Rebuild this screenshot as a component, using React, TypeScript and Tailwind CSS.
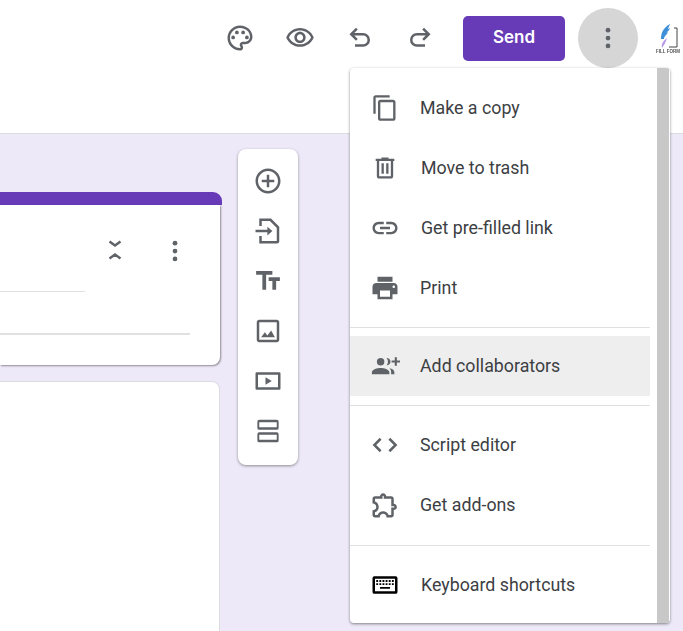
import React from 'react';

const Icon = ({ size = 30, className = '', children }: { size?: number; className?: string; children: React.ReactNode }) => (
    <svg width={size} height={size} viewBox="0 0 24 24" fill="#5f6368" className={className}>
        {children}
    </svg>
);

type MenuItem = { label: string; active?: boolean; size?: number; nudge?: boolean; icon: React.ReactNode };

const menuGroups: { separator: string; items: MenuItem[] }[] = [
    {
        separator: '',
        items: [
            { label: 'Make a copy', size: 28, icon: <path d="M16 1H4c-1.1 0-2 .9-2 2v14h2V3h12V1zm3 4H8c-1.1 0-2 .9-2 2v14c0 1.1.9 2 2 2h11c1.1 0 2-.9 2-2V7c0-1.1-.9-2-2-2zm0 16H8V7h11v14z" /> },
            { label: 'Move to trash', size: 28, nudge: true, icon: <path d="M15 4V3H9v1H4v2h1v13c0 1.1.9 2 2 2h10c1.1 0 2-.9 2-2V6h1V4h-5zm2 15H7V6h10v13zM9 8h2v9H9zm4 0h2v9h-2z" /> },
            { label: 'Get pre-filled link', nudge: true, icon: <path d="M3.9 12c0-1.71 1.39-3.1 3.1-3.1h4V7H7c-2.76 0-5 2.24-5 5s2.24 5 5 5h4v-1.9H7c-1.71 0-3.1-1.39-3.1-3.1zM8 13h8v-2H8v2zm9-6h-4v1.9h4c1.71 0 3.1 1.39 3.1 3.1s-1.39 3.1-3.1 3.1h-4V17h4c2.76 0 5-2.24 5-5s-2.24-5-5-5z" /> },
            { label: 'Print', icon: <path d="M19 8H5c-1.66 0-3 1.34-3 3v6h4v4h12v-4h4v-6c0-1.66-1.34-3-3-3zm-3 11H8v-5h8v5zm3-7c-.55 0-1-.45-1-1s.45-1 1-1 1 .45 1 1-.45 1-1 1zm-1-9H6v4h12V3z" /> },
        ],
    },
    {
        separator: 'mt-[9px] mb-[8px]',
        items: [
            {
                label: 'Add collaborators',
                active: true,
                icon: (
                    <>
                        <circle cx="8.5" cy="8.5" r="3" />
                        <path d="M1.500 18.500v-1.600c0-2.200 4.500-3.400 7-3.400s7 1.200 7 3.400v1.600zM13.200 5.600c1.900 0 3.200 1.300 3.200 2.900s-1.300 2.900-3.200 2.900c.7-.8 1.100-1.800 1.100-2.900s-.4-2.100-1.100-2.900zM15.600 13.700c2 .4 3.900 1.400 3.900 3.200v1.600h-2.600v-1.600c0-1.300-.5-2.400-1.300-3.200z" />
                        <path d="M19.800 5h1.700v2.500H24v1.700h-2.500v2.500h-1.700V9.200h-2.500V7.500h2.500z" />
                    </>
                ),
            },
        ],
    },
    {
        separator: 'my-[9px]',
        items: [
            { label: 'Script editor', icon: <path d="M8.500 7l-5 5 5 5M15.500 7l5 5-5 5" fill="none" stroke="#5f6368" strokeWidth="2" /> },
            { label: 'Get add-ons', icon: <path d="M10.5 4.5c.28 0 .5.22.5.5v2h6v6h2c.28 0 .5.22.5.5s-.22.5-.5.5h-2v6h-2.12c-.68-1.75-2.39-3-4.38-3s-3.7 1.25-4.38 3H4v-2.12c1.75-.68 3-2.39 3-4.38 0-1.99-1.24-3.7-2.99-4.38L4 7h6V5c0-.28.22-.5.5-.5m0-2C9.12 2.5 8 3.62 8 5H4c-1.1 0-1.99.9-1.99 2v3.8h.29c1.49 0 2.7 1.21 2.7 2.7s-1.21 2.7-2.7 2.7H2V20c0 1.1.9 2 2 2h3.8v-.3c0-1.49 1.21-2.7 2.7-2.7s2.7 1.21 2.7 2.7v.3H17c1.1 0 2-.9 2-2v-4c1.38 0 2.5-1.12 2.5-2.5S20.38 11 19 11V7c0-1.1-.9-2-2-2h-4c0-1.38-1.12-2.5-2.5-2.5z" /> },
        ],
    },
    {
        separator: 'mt-[10px] mb-[9px]',
        items: [
            {
                label: 'Keyboard shortcuts',
                nudge: true,
                icon: (
                    <g fill="#000">
                        <path fillRule="evenodd" d="M3.500 5h17A1.500 1.500 0 0 1 22 6.500v11a1.500 1.500 0 0 1-1.500 1.500h-17A1.500 1.500 0 0 1 2 17.500v-11A1.500 1.500 0 0 1 3.500 5zM4 7v10h16V7z" />
                        <path d="M5 8h1.500v1.500H5zM7.500 8H9v1.500H7.500zM10 8h1.500v1.500H10zM12.500 8H14v1.500h-1.500zM15 8h1.500v1.500H15zM17.500 8H19v1.500h-1.500zM5 10.500h1.500V12H5zM7.500 10.500H9V12H7.500zM10 10.500h1.500V12H10zM12.500 10.500H14V12h-1.500zM15 10.500h1.500V12H15zM17.500 10.500H19V12h-1.500zM8 13.500h8V15H8z" />
                    </g>
                ),
            },
        ],
    },
];

const Header = () => (
    <div className="h-[134px] bg-white border-b border-[#dadce0] shrink-0">
        <div className="flex items-center pl-[210px] pt-[8px]">
            <div className="w-[60px] h-[60px] flex items-center justify-center">
                <Icon>
                    <path d="M12 22C6.49 22 2 17.51 2 12S6.490 2 12 2s10 4.040 10 9c0 3.310-2.690 6-6 6h-1.770c-.280 0-.500.220-.500.500 0 .120.050.230.130.330.410.470.640 1.060.640 1.670 0 1.380-1.120 2.500-2.500 2.500zm0-18c-4.410 0-8 3.590-8 8s3.590 8 8 8c.280 0 .500-.220.500-.500 0-.160-.080-.280-.140-.350-.410-.460-.630-1.050-.630-1.650 0-1.380 1.120-2.500 2.500-2.500H16c2.210 0 4-1.790 4-4 0-3.860-3.590-7-8-7z" />
                    <circle cx="6.500" cy="11.500" r="1.500" />
                    <circle cx="9.500" cy="7.500" r="1.500" />
                    <circle cx="14.500" cy="7.500" r="1.500" />
                    <circle cx="17.500" cy="11.500" r="1.500" />
                </Icon>
            </div>
            <div className="w-[60px] h-[60px] flex items-center justify-center">
                <Icon>
                    <path d="M12 6c3.790 0 7.170 2.130 8.820 5.500C19.170 14.870 15.790 17 12 17s-7.170-2.130-8.820-5.500C4.830 8.130 8.210 6 12 6m0-2C7 4 2.730 7.110 1 11.500 2.730 15.890 7 19 12 19s9.270-3.110 11-7.500C21.270 7.110 17 4 12 4zm0 5c1.380 0 2.500 1.120 2.500 2.500S13.380 14 12 14s-2.500-1.120-2.500-2.500S10.620 9 12 9m0-2c-2.480 0-4.500 2.020-4.500 4.500S9.520 16 12 16s4.500-2.020 4.500-4.500S14.480 7 12 7z" />
                </Icon>
            </div>
            <div className="w-[60px] h-[60px] flex items-center justify-center">
                <Icon>
                    <path d="M9.500 4.500L5 9l4.500 4.500M5 9h9.500a4.500 4.500 0 0 1 0 9H8" fill="none" stroke="#5f6368" strokeWidth="2" />
                </Icon>
            </div>
            <div className="w-[60px] h-[60px] flex items-center justify-center">
                <Icon>
                    <path d="M14.500 4.500L19 9l-4.500 4.500M19 9H9.500a4.500 4.500 0 0 0 0 9H16" fill="none" stroke="#5f6368" strokeWidth="2" />
                </Icon>
            </div>
            <button className="ml-[13px] w-[102px] h-[45px] rounded-[5px] bg-[#673ab7] text-white text-[17px] font-semibold font-['Inter',sans-serif]">
                Send
            </button>
            <div className="ml-[13px] w-[60px] h-[60px] rounded-full bg-[#d6d6d6] flex items-center justify-center">
                <Icon>
                    <circle cx="12" cy="5.700" r="1.900" />
                    <circle cx="12" cy="12" r="1.900" />
                    <circle cx="12" cy="18.300" r="1.900" />
                </Icon>
            </div>
            <div className="ml-[17px] w-[26px] flex flex-col items-center blur-[0.4px]">
                <svg width="26" height="27" viewBox="0 0 26 27">
                    <path d="M6 17c0-6 2-11 9-15-1 3-2 4-2 5 1 0 1-1 2-1-1 3-3 4-4 5l2-1c-1 3-4 4-4 7z" fill="#3f8fd8" />
                    <path d="M7 26c-1-4 1-7 5-10-1 4-3 7-5 10z" fill="#b49ae8" />
                    <path d="M19 6h3v19h-8" fill="none" stroke="#444" strokeWidth="1" />
                </svg>
                <span className="text-[4.5px] leading-[5px] font-bold text-[#555] whitespace-nowrap font-['Liberation_Sans',sans-serif]">FILL FORM</span>
            </div>
        </div>
    </div>
);

const FormCards = () => (
    <div className="w-[222px] pt-[58px] shrink-0 flex flex-col">
        <div className="w-[222px] h-[13px] bg-[#673ab7] rounded-tr-[9px]" />
        <div className="w-[220px] h-[160px] bg-white rounded-br-[8px] shadow-[1px_1px_2px_rgba(0,0,0,0.4)]">
            <div className="h-[87px] border-b border-[#e0e0e0] mr-[135px]" />
            <div className="h-[43px] border-b-2 border-[#e0e0e0] mr-[30px]" />
        </div>
        <div className="mt-[16px] w-[220px] h-[300px] bg-white rounded-tr-[8px] border-t border-r border-[#dadce0]" />
    </div>
);

const Toolbar = () => (
    <div className="ml-[16px] mt-[15px] w-[60px] h-[316px] bg-white rounded-[8px] shadow-[0_1px_3px_rgba(0,0,0,0.4)] shrink-0 flex flex-col items-center pt-[17px] gap-[20px]">
        <Icon>
            <path d="M13 7h-2v4H7v2h4v4h2v-4h4v-2h-4V7zm-1-5C6.480 2 2 6.480 2 12s4.480 10 10 10 10-4.480 10-10S17.520 2 12 2zm0 18c-4.410 0-8-3.590-8-8s3.590-8 8-8 8 3.590 8 8-3.590 8-8 8z" />
        </Icon>
        <Icon>
            <path d="M6 8V3h8l6 6v11a1 1 0 0 1-1 1H6v-5" fill="none" stroke="#5f6368" strokeWidth="2" />
            <path d="M2 11h9.500v-2.500L15.500 12l-4 3.500V13H2z" />
        </Icon>
        <Icon>
            <path d="M2.500 4v3h5v12h3V7h5V4h-13zm19 5h-9v3h3v7h3v-7h3V9z" />
        </Icon>
        <Icon>
            <path d="M19 5v14H5V5h14m0-2H5c-1.100 0-2 .9-2 2v14c0 1.100.9 2 2 2h14c1.100 0 2-.9 2-2V5c0-1.100-.9-2-2-2zM6.500 17l3-4 2 2.500 3-4 3 5.500z" />
        </Icon>
        <Icon>
            <path d="M21 5H3a1 1 0 0 0-1 1v12a1 1 0 0 0 1 1h18a1 1 0 0 0 1-1V6a1 1 0 0 0-1-1zm-1 12H4V7h16zM10 9v6l5-3z" />
        </Icon>
        <Icon>
            <path d="M5 3h14a1.500 1.500 0 0 1 1.500 1.500v5A1.500 1.500 0 0 1 19 11H5a1.500 1.500 0 0 1-1.500-1.500v-5A1.500 1.500 0 0 1 5 3zm0 2v4h14V5zM5 13h14a1.500 1.500 0 0 1 1.500 1.500v5A1.500 1.500 0 0 1 19 21H5a1.500 1.500 0 0 1-1.500-1.500v-5A1.500 1.500 0 0 1 5 13zm0 2v4h14v-4z" />
        </Icon>
    </div>
);

const OverflowMenu = () => (
    <div className="absolute left-[350px] top-[68px] w-[320px] h-[555px] bg-white rounded-[4px] shadow-[0_1px_3px_rgba(0,0,0,0.45)] overflow-hidden font-['Roboto',sans-serif] flex">
        <div className="w-[300px] pt-[10px]">
            {menuGroups.map((group) => (
                <div key={group.items[0].label}>
                    {group.separator && <div className={`h-px bg-[#e0e0e0] ${group.separator}`} />}
                    {group.items.map((item) => (
                        <div key={item.label} className={`h-[60px] flex items-center pl-[20px] gap-[20px] ${item.active ? 'bg-[#eeeeee]' : ''}`}>
                            <div className="w-[30px] flex justify-center">
                                <Icon size={item.size ?? 30}>{item.icon}</Icon>
                            </div>
                            <span className={`text-[17.8px] text-[#3c4043] ${item.nudge ? 'ml-px' : ''}`}>{item.label}</span>
                        </div>
                    ))}
                </div>
            ))}
        </div>
        <div className="ml-[7px] w-[12px] h-full bg-[#c8c8c8]" />
    </div>
);

const App = () => {
    return (
        <div className="relative w-[683px] h-[631px] overflow-hidden bg-[#ede9f8] flex flex-col">
            <Header />
            <div className="flex items-start flex-1">
                <FormCards />
                <Toolbar />
            </div>
            {/* chevrons and dots on the first card */}
            <div className="absolute left-[103px] top-[238px]">
                <svg width="24" height="24" viewBox="0 0 24 24" fill="none" stroke="#5f6368" strokeWidth="2.400">
                    <path d="M6.500 3.500l5.500 4 5.500-4M6.500 20.500l5.500-4 5.500 4" />
                </svg>
            </div>
            <div className="absolute left-[160px] top-[236px]">
                <Icon>
                    <circle cx="12" cy="5.700" r="1.900" />
                    <circle cx="12" cy="12" r="1.900" />
                    <circle cx="12" cy="18.300" r="1.900" />
                </Icon>
            </div>
            <OverflowMenu />
        </div>
    );
};

export default App;
